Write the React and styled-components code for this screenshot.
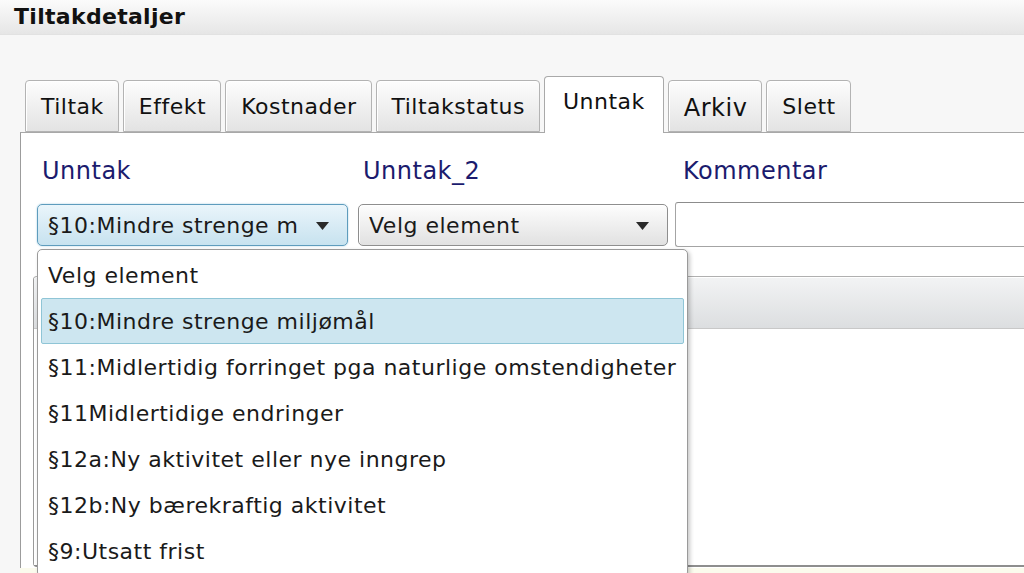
import React from 'react';
import styled, { createGlobalStyle } from 'styled-components';

const GlobalStyle = createGlobalStyle`
  html, body {
    margin: 0;
    padding: 0;
    height: 100%;
    overflow: hidden;
    background: #f4f4f4;
    font-family: "DejaVu Sans", Verdana, sans-serif;
  }
`;

const tabs = ['Tiltak', 'Effekt', 'Kostnader', 'Tiltakstatus', 'Unntak', 'Arkiv', 'Slett'];

const options = [
  'Velg element',
  '§10:Mindre strenge miljømål',
  '§11:Midlertidig forringet pga naturlige omstendigheter',
  '§11Midlertidige endringer',
  '§12a:Ny aktivitet eller nye inngrep',
  '§12b:Ny bærekraftig aktivitet',
  '§9:Utsatt frist',
];

const Caret = () => (
  <svg width="13" height="8" viewBox="0 0 13 8">
    <path d="M0 0 L13 0 L6.5 8 Z" fill="#2a2a2a" />
  </svg>
);

const App = () => (
  <Page>
    <GlobalStyle />
    <TitleBar>Tiltakdetaljer</TitleBar>
    <TabStrip>
      {tabs.map((t) => (
        <Tab key={t} $active={t === 'Unntak'} $big={t === 'Arkiv'}>
          {t}
        </Tab>
      ))}
    </TabStrip>
    <Panel>
      <FieldGrid>
        <Label>Unntak</Label>
        <Label>Unntak_2</Label>
        <Label>Kommentar</Label>
        <Select $focused>
          <SelectText $clip>§10:Mindre strenge m</SelectText>
          <Caret />
        </Select>
        <Select>
          <SelectText>Velg element</SelectText>
          <Caret />
        </Select>
        <TextInput />
      </FieldGrid>
      <GridBox>
        <GridHeader />
        <GridBody />
      </GridBox>
      <Dropdown>
        {options.map((o, i) => (
          <Option key={o} $selected={i === 1}>
            {o}
          </Option>
        ))}
      </Dropdown>
    </Panel>
    <FooterStrip />
  </Page>
);

export default App;

const Page = styled.div`
  width: 1024px;
  height: 573px;
  display: flex;
  flex-direction: column;
  background: #f7f7f7;
  overflow: hidden;
`;

const TitleBar = styled.div`
  height: 35px;
  box-sizing: border-box;
  padding: 4px 14px 0;
  font-size: 22px;
  letter-spacing: 0.3px;
  font-weight: bold;
  color: #111;
  background: linear-gradient(#fbfbfb, #e6e6e6);
  border-bottom: 1px solid #e2e2e2;
`;

const TabStrip = styled.div`
  display: flex;
  align-items: flex-end;
  gap: 4px;
  padding: 0 0 0 25px;
  margin-top: 40px;
  height: 57px;
  position: relative;
  z-index: 1;
`;

const Tab = styled.div`
  box-sizing: border-box;
  height: ${(p) => (p.$active ? '57px' : '52px')};
  padding: ${(p) => (p.$active ? '0 18px' : '0 14px 0 15px')};
  padding-top: ${(p) => (p.$big ? '4px' : p.$active ? '12px' : '0')};
  display: flex;
  align-items: ${(p) => (p.$active ? 'flex-start' : 'center')};
  font-size: ${(p) => (p.$big ? '24px' : '22px')};
  letter-spacing: 0.5px;
  color: #111;
  border: 1px solid ${(p) => (p.$active ? '#a9a9a9' : '#b3b3b3')};
  border-bottom: ${(p) => (p.$active ? 'none' : '1px solid #b3b3b3')};
  border-radius: 4px 4px 0 0;
  background: ${(p) => (p.$active ? '#ffffff' : 'linear-gradient(#fdfdfd, #e3e3e3)')};
  box-shadow: ${(p) => (p.$active ? 'none' : 'inset 1px 1px 0 #ffffff')};
  margin-bottom: ${(p) => (p.$active ? '-1px' : '0')};
`;

const Panel = styled.div`
  position: relative;
  flex: 1;
  margin-left: 20px;
  background: #ffffff;
  border-left: 1px solid #9c9c9c;
  border-top: 1px solid #a8a8a8;
  display: flex;
  flex-direction: column;
`;

const FieldGrid = styled.div`
  display: grid;
  grid-template-columns: 311px 310px 1fr;
  grid-template-rows: 28px 45px;
  column-gap: 10px;
  row-gap: 17px;
  padding: 24px 0 0 16px;
  align-items: center;
`;

const Label = styled.div`
  font-size: 24px;
  letter-spacing: 0.5px;
  color: #1b1b6e;
  padding-left: 5px;
`;

const Select = styled.div`
  height: 42px;
  box-sizing: border-box;
  display: flex;
  align-items: center;
  justify-content: space-between;
  padding: 2px 18px 0 10px;
  border-radius: 5px;
  border: 1px solid ${(p) => (p.$focused ? '#5e9cbd' : '#8e8e8e')};
  background: ${(p) =>
    p.$focused ? 'linear-gradient(#eaf5fb, #c7e2ef)' : 'linear-gradient(#fdfdfd, #e1e1e1)'};
  box-shadow: ${(p) => (p.$focused ? '0 0 2px #9cc8de' : 'inset 1px 1px 0 #ffffff')};
`;

const SelectText = styled.span`
  font-size: 22px;
  letter-spacing: 0.5px;
  color: #1a1a1a;
  white-space: nowrap;
  overflow: hidden;
  width: ${(p) => (p.$clip ? '250px' : 'auto')};
`;

const TextInput = styled.div`
  height: 45px;
  box-sizing: border-box;
  margin-left: -3px;
  background: #ffffff;
  border: 1px solid #a4a4a4;
  border-top-color: #8c8c8c;
  border-right: none;
  border-radius: 3px 0 0 3px;
`;

const GridBox = styled.div`
  margin: 29px 0 0 12px;
  height: 291px;
  box-sizing: border-box;
  border-top: 1px solid #b0b0b0;
  border-left: 1px solid #9a9a9a;
  border-bottom: 2px solid #8e8e8e;
  border-radius: 4px 0 0 4px;
  display: flex;
  flex-direction: column;
`;

const GridHeader = styled.div`
  height: 50px;
  margin-top: 1px;
  background: linear-gradient(#f2f3f4, #dcdee0);
  border-bottom: 1px solid #c8c8c8;
`;

const GridBody = styled.div`
  flex: 1;
  background: #ffffff;
`;

const FooterStrip = styled.div`
  height: 5px;
  margin-left: 20px;
  background: #fbfbed;
`;

const Dropdown = styled.div`
  position: absolute;
  left: 16px;
  top: 116px;
  width: 651px;
  box-sizing: border-box;
  padding: 2px 3px 2px;
  background: #ffffff;
  border: 1px solid #9a9a9a;
  border-radius: 5px;
  box-shadow: 2px 2px 4px rgba(0, 0, 0, 0.22);
  display: flex;
  flex-direction: column;
`;

const Option = styled.div`
  height: 46px;
  box-sizing: border-box;
  display: flex;
  align-items: center;
  padding-left: 6px;
  font-size: 22px;
  letter-spacing: 0.5px;
  color: #1a1a1a;
  white-space: nowrap;
  border-radius: 2px;
  border: 1px solid ${(p) => (p.$selected ? '#8fc5d6' : 'transparent')};
  background: ${(p) => (p.$selected ? '#cde6f0' : 'transparent')};
`;
